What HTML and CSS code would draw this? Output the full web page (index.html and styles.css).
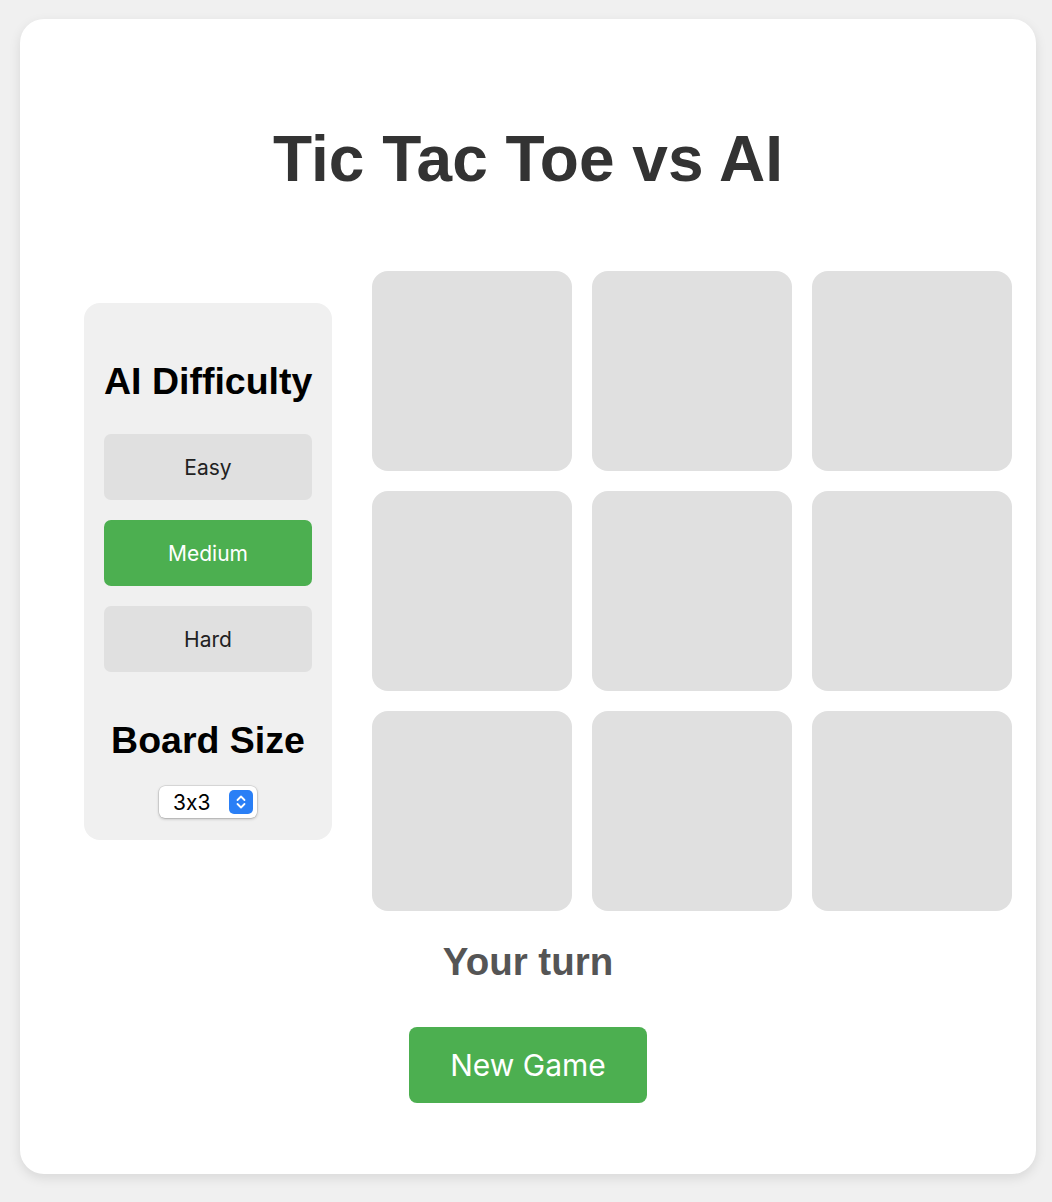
FILE: index.html
```html
<!DOCTYPE html>
<html lang="en">
<head>
<meta charset="utf-8">
<title>Tic Tac Toe vs AI</title>
<link rel="stylesheet" href="styles.css">
</head>
<body>
<div class="card">
  <h1 class="title">Tic Tac Toe vs AI</h1>
  <div class="game-row">
    <aside class="panel">
      <h2 class="panel-heading first">AI Difficulty</h2>
      <div class="diff-list">
        <button class="diff-btn">Easy</button>
        <button class="diff-btn active">Medium</button>
        <button class="diff-btn">Hard</button>
      </div>
      <h2 class="panel-heading second">Board Size</h2>
      <div class="select-wrap">
        <select class="size-select">
          <option>3x3</option>
          <option>4x4</option>
          <option>5x5</option>
        </select>
        <svg class="select-icon" width="24" height="24" viewBox="0 0 24 24" aria-hidden="true">
          <rect x="0" y="0" width="24" height="24" rx="5" fill="#2a7ff6"/>
          <path d="M8.5 10 L12 6.5 L15.5 10" fill="none" stroke="#fff" stroke-width="1.8" stroke-linecap="round" stroke-linejoin="round"/>
          <path d="M8.5 14 L12 17.5 L15.5 14" fill="none" stroke="#fff" stroke-width="1.8" stroke-linecap="round" stroke-linejoin="round"/>
        </svg>
      </div>
    </aside>
    <div class="board">
      <div class="cell"></div><div class="cell"></div><div class="cell"></div>
      <div class="cell"></div><div class="cell"></div><div class="cell"></div>
      <div class="cell"></div><div class="cell"></div><div class="cell"></div>
    </div>
  </div>
  <p class="status">Your turn</p>
  <div class="actions">
    <button class="new-game">New Game</button>
  </div>
</div>
</body>
</html>
```
FILE: styles.css
```css
html, body {
  margin: 0;
  padding: 0;
}

body {
  background: #f0f0f0;
  font-family: "Liberation Sans", Arial, sans-serif;
  padding: 19px 16px 28px 20px;
}

.card {
  background: #ffffff;
  border-radius: 24px;
  box-shadow: 0 4px 12px rgba(0, 0, 0, 0.1);
  padding: 102px 24px 71px 24px;
  box-sizing: border-box;
  height: 1155px;
}

.title {
  margin: 0;
  font-family: "Liberation Sans", Arial, sans-serif;
  font-weight: bold;
  font-size: 64px;
  line-height: 76px;
  color: #333333;
  text-align: center;
}

.game-row {
  display: flex;
  align-items: flex-start;
  gap: 40px;
  margin-top: 74px;
  padding-left: 40px;
}

.panel {
  width: 248px;
  flex: 0 0 248px;
  box-sizing: border-box;
  margin-top: 32px;
  background: #f0f0f0;
  border-radius: 16px;
  padding: 20px 20px 22px 20px;
  text-align: center;
}

.panel-heading {
  margin: 0;
  font-family: "Liberation Sans", Arial, sans-serif;
  font-weight: bold;
  font-size: 37.5px;
  line-height: 44px;
  color: #000000;
  white-space: nowrap;
}

.panel-heading.first {
  margin-top: 36px;
}

.panel-heading.second {
  margin-top: 46px;
}

.diff-list {
  display: flex;
  flex-direction: column;
  gap: 20px;
  margin-top: 31px;
}

.diff-btn {
  display: block;
  width: 100%;
  height: 66px;
  border: none;
  border-radius: 7px;
  background: #e0e0e0;
  color: #222222;
  font-family: Inter, "Noto Sans", sans-serif;
  font-size: 21px;
  padding: 0;
  cursor: pointer;
}

.diff-btn.active {
  background: #4caf50;
  color: #ffffff;
}

.select-wrap {
  position: relative;
  width: 98px;
  height: 32px;
  margin: 24px auto 0 auto;
}

.size-select {
  appearance: none;
  -webkit-appearance: none;
  display: block;
  width: 98px;
  height: 32px;
  box-sizing: border-box;
  border: none;
  border-radius: 6px;
  background: #ffffff;
  box-shadow: 0 0 0 0.5px rgba(0, 0, 0, 0.15), 0 1px 3px rgba(0, 0, 0, 0.25);
  font-family: Inter, "Noto Sans", sans-serif;
  font-feature-settings: "calt" 0;
  font-size: 21px;
  color: #000000;
  padding: 0 0 0 14px;
  margin: 0;
}

.select-icon {
  position: absolute;
  top: 4px;
  right: 4px;
  pointer-events: none;
}

.board {
  display: grid;
  grid-template-columns: repeat(3, 200px);
  grid-auto-rows: 200px;
  gap: 20px;
}

.cell {
  background: #e0e0e0;
  border-radius: 16px;
}

.status {
  margin: 29px 0 0 0;
  font-family: "Liberation Sans", Arial, sans-serif;
  font-weight: bold;
  font-size: 38.5px;
  line-height: 44px;
  color: #555555;
  text-align: center;
}

.actions {
  display: flex;
  justify-content: center;
  margin-top: 43px;
}

.new-game {
  width: 238px;
  height: 76px;
  border: none;
  border-radius: 8px;
  background: #4caf50;
  color: #ffffff;
  font-family: Inter, "Noto Sans", sans-serif;
  font-size: 30px;
  padding: 0;
  cursor: pointer;
}
```
